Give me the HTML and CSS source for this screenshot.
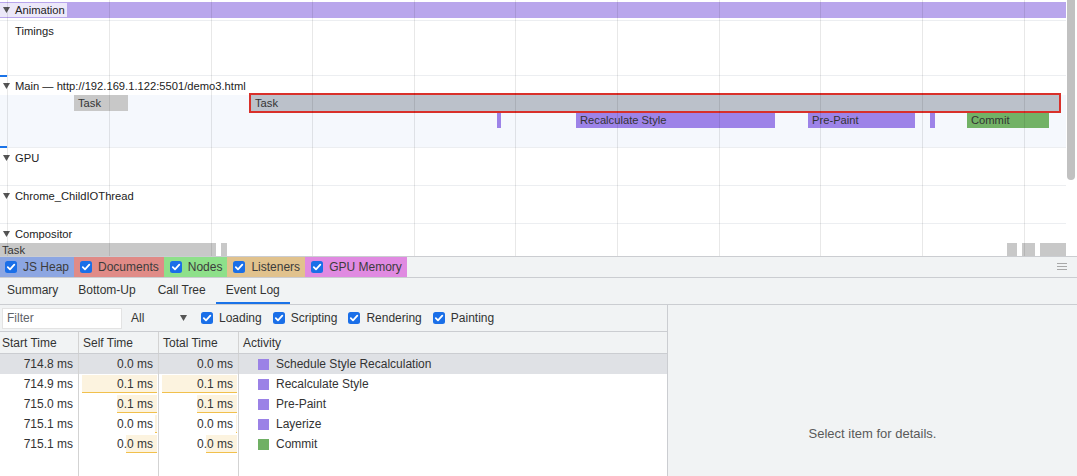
FILE: index.html
```html
<!DOCTYPE html>
<html>
<head>
<meta charset="utf-8">
<link rel="stylesheet" href="styles.css">
</head>
<body>
<div class="timeline">
  <div class="tracks">
    <div class="track t-anim">
      <div class="anim-bar">
        <span class="anim-label"><svg class="tri" width="7" height="6" viewBox="0 0 7 6"><path d="M0 0H7L3.5 6Z"/></svg>Animation</span>
      </div>
    </div>
    <div class="track t-timings"><div class="timings-label">Timings</div></div>
    <div class="track t-main">
      <div class="head"><svg class="tri" width="7" height="6" viewBox="0 0 7 6"><path d="M0 0H7L3.5 6Z"/></svg>Main — http://192.169.1.122:5501/demo3.html</div>
      <div class="main-body">
        <div class="lane">
          <div class="ev task" style="left:74px;width:54px">Task</div>
          <div class="ev task sel" style="left:251px;width:808px">Task</div>
        </div>
        <div class="lane lane2">
          <div class="ev render" style="left:497px;width:2px"></div>
          <div class="ev render" style="left:576px;width:199px">Recalculate Style</div>
          <div class="ev render" style="left:808px;width:107px">Pre-Paint</div>
          <div class="ev render" style="left:930px;width:5px"></div>
          <div class="ev paint" style="left:967px;width:82px">Commit</div>
        </div>
      </div>
    </div>
    <div class="track t-thread">
      <div class="head"><svg class="tri" width="7" height="6" viewBox="0 0 7 6"><path d="M0 0H7L3.5 6Z"/></svg>GPU</div>
    </div>
    <div class="track t-thread">
      <div class="head"><svg class="tri" width="7" height="6" viewBox="0 0 7 6"><path d="M0 0H7L3.5 6Z"/></svg>Chrome_ChildIOThread</div>
    </div>
    <div class="track t-comp">
      <div class="head"><svg class="tri" width="7" height="6" viewBox="0 0 7 6"><path d="M0 0H7L3.5 6Z"/></svg>Compositor</div>
      <div class="lane">
        <div class="ev task ctask" style="left:0;width:216px">Task</div>
        <div class="ev task" style="left:221px;width:6px"></div>
        <div class="ev task" style="left:1007px;width:10px"></div>
        <div class="ev task" style="left:1022px;width:13px"></div>
        <div class="ev task" style="left:1040px;width:26px"></div>
      </div>
    </div>
    <div class="grid">
      <span class="gl" style="left:7px"></span>
      <span class="gl" style="left:109px"></span>
      <span class="gl" style="left:211px"></span>
      <span class="gl" style="left:312px"></span>
      <span class="gl" style="left:414px"></span>
      <span class="gl" style="left:515px"></span>
      <span class="gl" style="left:617px"></span>
      <span class="gl" style="left:719px"></span>
      <span class="gl" style="left:820px"></span>
      <span class="gl" style="left:922px"></span>
      <span class="gl" style="left:1024px"></span>
    </div>
    <span class="mark mark-top"></span>
    <span class="mark mark-bottom"></span>
  </div>
  <div class="scroll"><div class="thumb"></div></div>
</div>

<div class="bottom">
  <div class="legend">
    <label class="chip c-heap"><svg class="cb" width="12" height="12" viewBox="0 0 12 12"><rect width="12" height="12" rx="2.5"/><path d="M2.8 6.2L5 8.4L9.3 3.7"/></svg>JS Heap</label>
    <label class="chip c-docs"><svg class="cb" width="12" height="12" viewBox="0 0 12 12"><rect width="12" height="12" rx="2.5"/><path d="M2.8 6.2L5 8.4L9.3 3.7"/></svg>Documents</label>
    <label class="chip c-nodes"><svg class="cb" width="12" height="12" viewBox="0 0 12 12"><rect width="12" height="12" rx="2.5"/><path d="M2.8 6.2L5 8.4L9.3 3.7"/></svg>Nodes</label>
    <label class="chip c-list"><svg class="cb" width="12" height="12" viewBox="0 0 12 12"><rect width="12" height="12" rx="2.5"/><path d="M2.8 6.2L5 8.4L9.3 3.7"/></svg>Listeners</label>
    <label class="chip c-gpu"><svg class="cb" width="12" height="12" viewBox="0 0 12 12"><rect width="12" height="12" rx="2.5"/><path d="M2.8 6.2L5 8.4L9.3 3.7"/></svg>GPU Memory</label>
    <svg class="menu" width="10" height="8" viewBox="0 0 10 8"><path d="M0 0.5H10M0 3.5H10M0 6.5H10"/></svg>
  </div>
  <div class="tabs">
    <div class="tab">Summary</div>
    <div class="tab">Bottom-Up</div>
    <div class="tab">Call Tree</div>
    <div class="tab active">Event Log</div>
  </div>
  <div class="lower">
    <div class="log">
      <div class="toolbar">
        <input class="filter" type="text" placeholder="Filter">
        <div class="select"><span>All</span><svg class="arrow" width="7" height="6" viewBox="0 0 7 6"><path d="M0 0H7L3.5 6Z"/></svg></div>
        <label class="check first"><svg class="cb" width="12" height="12" viewBox="0 0 12 12"><rect width="12" height="12" rx="2.5"/><path d="M2.8 6.2L5 8.4L9.3 3.7"/></svg>Loading</label>
        <label class="check"><svg class="cb" width="12" height="12" viewBox="0 0 12 12"><rect width="12" height="12" rx="2.5"/><path d="M2.8 6.2L5 8.4L9.3 3.7"/></svg>Scripting</label>
        <label class="check"><svg class="cb" width="12" height="12" viewBox="0 0 12 12"><rect width="12" height="12" rx="2.5"/><path d="M2.8 6.2L5 8.4L9.3 3.7"/></svg>Rendering</label>
        <label class="check"><svg class="cb" width="12" height="12" viewBox="0 0 12 12"><rect width="12" height="12" rx="2.5"/><path d="M2.8 6.2L5 8.4L9.3 3.7"/></svg>Painting</label>
      </div>
      <div class="table">
        <div class="row thead">
          <div class="cell c1 h">Start Time</div>
          <div class="cell c2 h">Self Time</div>
          <div class="cell c3 h">Total Time</div>
          <div class="cell c4 h">Activity</div>
        </div>
        <div class="row selected">
          <div class="cell c1 num"><span class="val">714.8 ms</span></div>
          <div class="cell c2 num"><span class="val">0.0 ms</span></div>
          <div class="cell c3 num"><span class="val">0.0 ms</span></div>
          <div class="cell c4 act"><span class="sq purple"></span>Schedule Style Recalculation</div>
        </div>
        <div class="row">
          <div class="cell c1 num"><span class="val">714.9 ms</span></div>
          <div class="cell c2 num"><span class="bar" style="width:75px"></span><span class="val">0.1 ms</span></div>
          <div class="cell c3 num"><span class="bar" style="width:75px"></span><span class="val">0.1 ms</span></div>
          <div class="cell c4 act"><span class="sq purple"></span>Recalculate Style</div>
        </div>
        <div class="row">
          <div class="cell c1 num"><span class="val">715.0 ms</span></div>
          <div class="cell c2 num"><span class="bar" style="width:40px"></span><span class="val">0.1 ms</span></div>
          <div class="cell c3 num"><span class="bar" style="width:40px"></span><span class="val">0.1 ms</span></div>
          <div class="cell c4 act"><span class="sq purple"></span>Pre-Paint</div>
        </div>
        <div class="row">
          <div class="cell c1 num"><span class="val">715.1 ms</span></div>
          <div class="cell c2 num"><span class="bar" style="width:2px"></span><span class="val">0.0 ms</span></div>
          <div class="cell c3 num"><span class="bar" style="width:1px"></span><span class="val">0.0 ms</span></div>
          <div class="cell c4 act"><span class="sq purple"></span>Layerize</div>
        </div>
        <div class="row">
          <div class="cell c1 num"><span class="val">715.1 ms</span></div>
          <div class="cell c2 num"><span class="bar" style="width:31px"></span><span class="val">0.0 ms</span></div>
          <div class="cell c3 num"><span class="bar" style="width:31px"></span><span class="val">0.0 ms</span></div>
          <div class="cell c4 act"><span class="sq green"></span>Commit</div>
        </div>
        <div class="row filler">
          <div class="cell c1"></div>
          <div class="cell c2"></div>
          <div class="cell c3"></div>
          <div class="cell c4"></div>
        </div>
      </div>
    </div>
    <div class="details">Select item for details.</div>
  </div>
</div>
</body>
</html>
```

FILE: styles.css
```css
* { box-sizing: border-box; }

html, body {
  margin: 0;
  padding: 0;
}

body {
  width: 1077px;
  height: 476px;
  overflow: hidden;
  background: #fff;
  font-family: "Liberation Sans", Arial, sans-serif;
  font-size: 12px;
  color: #333;
}

/* ---------- timeline ---------- */
.timeline {
  display: flex;
  height: 256px;
}

.tracks {
  position: relative;
  flex: 1;
  overflow: hidden;
  font-size: 11.2px;
}

.scroll {
  width: 11px;
  padding: 0 2px 0 1px;
  background: #fff;
}

.thumb {
  width: 8px;
  height: 180px;
  background: #c1c1c1;
  border-radius: 0 0 4px 4px;
}

.track {
  border-bottom: 1px solid #eceef1;
}

.tri {
  fill: #555;
  flex: none;
}

.t-anim {
  height: 21px;
  padding-top: 2px;
}

.anim-bar {
  height: 16px;
  background: #b9a6ec;
  display: flex;
  align-items: center;
}

.anim-label {
  display: flex;
  align-items: center;
  gap: 5px;
  height: 14px;
  padding: 0 3px;
  width: 67px;
  background: #ece8f9;
  color: #222;
}

.t-timings {
  height: 55px;
}

.timings-label {
  padding: 3px 0 0 15px;
  line-height: 14px;
  color: #222;
}

.head {
  height: 19px;
  display: flex;
  align-items: center;
  gap: 5px;
  padding-left: 3px;
  color: #222;
  white-space: nowrap;
}

.t-main {
  height: 72px;
}

.main-body {
  height: 52px;
  background: #f5f8fd;
}

.lane {
  position: relative;
  height: 17px;
}

.ev {
  position: absolute;
  top: 0;
  height: 16px;
  line-height: 16px;
  padding-left: 4px;
  white-space: nowrap;
  overflow: hidden;
  color: #333;
}

.lane2 .ev {
  top: 1px;
  height: 15px;
  line-height: 15px;
}

.task { background: #c8c8c8; }
.task.sel {
  background: #bbc1ca;
  outline: 2px solid #d9302a;
  overflow: visible;
}
.render { background: #9d83e8; }
.paint { background: #72b266; }

.t-thread {
  height: 38px;
}

.t-comp {
  height: 32px;
  border-bottom: none;
}

.t-comp .lane { height: 14px; }
.t-comp .ev {
  height: 14px;
  line-height: 15px;
}
.ctask { padding-left: 2px; }

.grid {
  position: absolute;
  inset: 0;
  pointer-events: none;
}

.gl {
  position: absolute;
  top: 0;
  bottom: 0;
  width: 1px;
  background: rgba(0, 0, 0, 0.09);
}

.mark {
  position: absolute;
  left: 0;
  width: 7px;
  height: 2px;
  background: #1a73e8;
}
.mark-top { top: 75px; }
.mark-bottom { top: 146px; }

/* ---------- bottom panel ---------- */
.bottom {
  height: 220px;
  background: #f1f3f4;
  display: flex;
  flex-direction: column;
}

.cb { flex: none; }
.cb rect { fill: #1a6fe8; }
.cb path {
  fill: none;
  stroke: #fff;
  stroke-width: 1.8;
  stroke-linecap: round;
  stroke-linejoin: round;
}

.legend {
  height: 22px;
  flex: none;
  border-top: 1px solid #cbcdd1;
  border-bottom: 1px solid #cbcdd1;
  display: flex;
  align-items: center;
}

.chip {
  height: 20px;
  display: flex;
  align-items: center;
  gap: 6px;
  padding: 0 5px 0 6px;
  color: #3c3c3c;
  white-space: nowrap;
}
.chip:first-child { padding-left: 5px; }
.c-heap { background: #8ca6e2; }
.c-docs { background: #e08b87; }
.c-nodes { background: #8ee08a; }
.c-list { background: #e1c28d; }
.c-gpu { background: #e08ae1; }

.menu {
  margin-left: auto;
  margin-right: 10px;
}
.menu path {
  stroke: #a8a8a8;
  stroke-width: 1;
}

.tabs {
  height: 27px;
  flex: none;
  display: flex;
  border-bottom: 1px solid #cbcdd1;
}

.tab {
  display: flex;
  align-items: center;
  padding: 0 10px;
  color: #333;
  border-bottom: 2px solid transparent;
}
.tab:first-child { padding-left: 7px; }
.tab:nth-child(3) { padding-left: 12px; }
.tab.active { border-bottom-color: #1a73e8; }

.lower {
  flex: 1;
  display: flex;
  min-height: 0;
}

.log {
  width: 668px;
  flex: none;
  display: flex;
  flex-direction: column;
  border-right: 1px solid #cbcdd1;
}

.toolbar {
  height: 27px;
  flex: none;
  display: flex;
  align-items: center;
  padding-left: 2px;
  border-bottom: 1px solid #cbcdd1;
}

.filter {
  width: 120px;
  height: 21px;
  margin: 0;
  padding: 0 4px;
  border: 1px solid #e3e3e3;
  background: #fff;
  font: inherit;
  color: #333;
  outline: none;
}
.filter::placeholder { color: #5f6368; }

.select {
  margin-left: 9px;
  width: 56px;
  display: flex;
  align-items: center;
  justify-content: space-between;
  color: #333;
}
.arrow { fill: #555; }

.check {
  display: flex;
  align-items: center;
  gap: 6px;
  margin-left: 11px;
  color: #333;
}
.check.first { margin-left: 14px; }

.table {
  flex: 1;
  display: flex;
  flex-direction: column;
  background: #fff;
}

.row {
  display: flex;
  height: 20px;
  flex: none;
}

.thead {
  height: 22px;
  background: #f1f3f4;
  border-bottom: 1px solid #cbcdd1;
}

.row.selected { background: #dfe1e5; }

.row.filler {
  flex: 1;
  height: auto;
}

.cell {
  border-right: 1px solid #d3d3d3;
  white-space: nowrap;
}
.c1 { width: 79px; }
.c2 { width: 80px; }
.c3 { width: 80px; }
.c4 { flex: 1; border-right: none; }

.h {
  display: flex;
  align-items: center;
  padding-left: 4px;
  color: #333;
}
.c1.h { padding-left: 2px; }

.num {
  display: grid;
}
.num .val,
.num .bar {
  grid-area: 1 / 1;
}
.num .val {
  justify-self: end;
  padding-right: 5px;
  line-height: 20px;
  position: relative;
}
.num .bar {
  justify-self: end;
  align-self: start;
  margin: 1px 1px 0 0;
  height: 18px;
  background: #fcf3df;
  border-bottom: 1px solid #f1c04c;
}

.act {
  display: flex;
  align-items: center;
  gap: 7px;
  padding-left: 19px;
  color: #333;
}

.sq {
  width: 11px;
  height: 11px;
  flex: none;
}
.sq.purple { background: #9b82e6; }
.sq.green { background: #70b064; }

.details {
  flex: 1;
  display: flex;
  justify-content: center;
  padding-top: 121px;
  font-size: 13px;
  line-height: 15px;
  color: #5a5a5a;
}
```
